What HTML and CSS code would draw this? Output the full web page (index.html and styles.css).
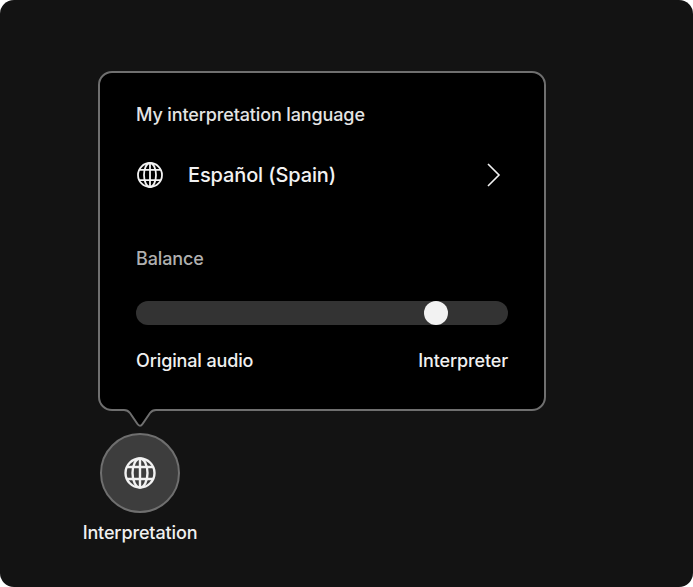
FILE: index.html
```html
<!DOCTYPE html>
<html lang="en">
<head>
<meta charset="utf-8">
<title>Interpretation</title>
<link rel="stylesheet" href="styles.css">
</head>
<body>
<main class="window">
  <section class="popover">
    <h2 class="heading">My interpretation language</h2>
    <div class="language">
      <svg class="globe-small" viewBox="0 0 28 28" fill="none" stroke="currentColor" stroke-width="1.8">
        <circle cx="14" cy="14" r="12"/>
        <ellipse cx="14" cy="14" rx="6" ry="12"/>
        <path d="M14 2v24M3.200 8.800h21.600M3.200 19.200h21.600"/>
      </svg>
      <span class="language-name">Español (Spain)</span>
      <svg class="chevron" viewBox="0 0 14 24" fill="none" stroke="currentColor" stroke-width="1.6">
        <path d="M1 1 12 12 1 23"/>
      </svg>
    </div>
    <div class="balance-label">Balance</div>
    <div class="slider"><span class="thumb"></span></div>
    <div class="slider-ends"><span>Original audio</span><span>Interpreter</span></div>
    <svg class="tail" viewBox="0 0 46 20" fill="none">
      <path class="tail-fill" d="M0 0H46V1H39C36 1 34.500 2 33 4L25.500 15C24 17.300 22 17.300 20.500 15L13 4C11.500 2 10 1 7 1H0Z"/>
      <path class="tail-line" d="M0 1H7C10 1 11.500 2 13 4L20.500 15C22 17.300 24 17.300 25.500 15L33 4C34.500 2 36 1 39 1H46"/>
    </svg>
  </section>
  <div class="dock">
    <button class="dock-button" type="button" aria-label="Interpretation">
      <svg class="globe-large" viewBox="0 0 32 32" fill="none" stroke="currentColor" stroke-width="2.400">
        <circle cx="16" cy="16" r="14.500"/>
        <ellipse cx="16" cy="16" rx="7.500" ry="14.500"/>
        <path d="M16 1.500v29M3 10h26M3 22h26"/>
      </svg>
    </button>
    <span class="dock-label">Interpretation</span>
  </div>
</main>
</body>
</html>
```
FILE: styles.css
```css
* {
  box-sizing: border-box;
}

html,
body {
  margin: 0;
  background: #ffffff;
}

body {
  width: 693px;
  height: 587px;
  overflow: hidden;
  font-family: Inter, "Liberation Sans", sans-serif;
  font-weight: 500;
  letter-spacing: -0.13px;
}

.window {
  width: 693px;
  height: 587px;
  padding: 71px 0 0 82px;
  border-radius: 14px;
  background: #131313;
}

.popover {
  position: relative;
  width: 448px;
  height: 340px;
  margin-left: 16px;
  padding: 30px 36px 0 36px;
  border: 2px solid #6f6f6f;
  border-radius: 14px;
  background: #000000;
  color: #f0f0f0;
}

.heading {
  margin: 0;
  font-size: 18px;
  line-height: 24px;
  font-weight: 500;
  color: #e4e4e4;
}

.language {
  display: flex;
  align-items: center;
  height: 28px;
  margin-top: 34px;
  color: #f2f2f2;
}

.globe-small {
  width: 28px;
  height: 28px;
  flex: none;
}

.language-name {
  margin-left: 24px;
  font-size: 20px;
  line-height: 28px;
  flex: 1;
}

.chevron {
  width: 14px;
  height: 24px;
  flex: none;
  margin-right: 7px;
}

.balance-label {
  margin-top: 58px;
  font-size: 18px;
  line-height: 24px;
  color: #b0b0b0;
}

.slider {
  position: relative;
  height: 24px;
  margin-top: 30px;
  border-radius: 12px;
  background: #333333;
}

.thumb {
  position: absolute;
  left: 288px;
  top: 0;
  width: 24px;
  height: 24px;
  border-radius: 50%;
  background: #f2f2f2;
}

.slider-ends {
  display: flex;
  justify-content: space-between;
  margin-top: 24px;
  font-size: 18px;
  line-height: 24px;
  color: #f0f0f0;
}

.tail {
  position: absolute;
  left: 17px;
  top: 336px;
  width: 46px;
  height: 20px;
}

.tail-fill {
  fill: #000000;
}

.tail-line {
  stroke: #6f6f6f;
  stroke-width: 2;
}

.dock {
  display: flex;
  flex-direction: column;
  align-items: center;
  width: 116px;
  margin-top: 22px;
}

.dock-button {
  display: flex;
  align-items: center;
  justify-content: center;
  width: 80px;
  height: 80px;
  padding: 0;
  border: 2px solid #6f6f6f;
  border-radius: 50%;
  background: #3d3d3d;
  color: #f2f2f2;
}

.globe-large {
  width: 32px;
  height: 32px;
}

.dock-label {
  margin-top: 8px;
  font-size: 18px;
  line-height: 24px;
  color: #f0f0f0;
  white-space: nowrap;
}
```
